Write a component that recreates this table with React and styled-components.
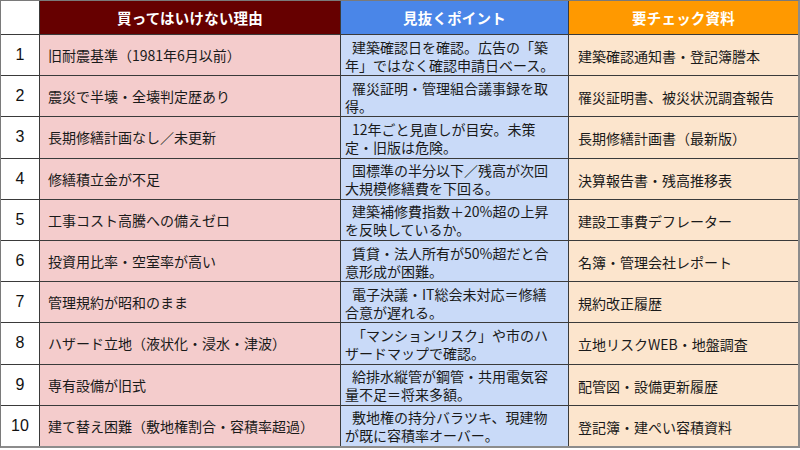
import React from "react";
import styled, { createGlobalStyle } from "styled-components";

const Global = createGlobalStyle`
  html, body { margin: 0; padding: 0; background: #ffffff; }
  body { font-family: "Noto Sans CJK JP", "Noto Sans", sans-serif; }
`;

const Table = styled.div`
  box-sizing: border-box;
  width: 800px;
  height: 448px;
  border-top: 1px solid #7a7a7a;
  border-left: 1px solid #7a7a7a;
  border-right: 2px solid #8c8c8c;
  border-bottom: 2px solid #8c8c8c;
  display: grid;
  grid-template-columns: 38px 300px 227px 1fr;
  grid-template-rows: 33px repeat(10, 1fr);
  gap: 1px;
  background: #3a3a3a;
`;

const HeaderCell = styled.div`
  background: ${(p) => p.$bg};
  color: #ffffff;
  font-weight: 700;
  font-size: 14.5px;
  display: flex;
  align-items: center;
  justify-content: center;
  letter-spacing: 0.2px;
`;

const NumCell = styled.div`
  background: #ffffff;
  color: #111;
  font-family: "Liberation Sans", Arial, sans-serif;
  font-size: 16px;
  display: flex;
  align-items: center;
  justify-content: center;
`;

const ReasonCell = styled.div`
  background: #f4cccc;
  color: #1a1a1a;
  font-size: 14px;
  display: flex;
  align-items: center;
  padding: 0 8px;
  white-space: nowrap;
`;

const PointCell = styled.div`
  background: #c9daf8;
  color: #1a1a1a;
  font-size: 14px;
  display: flex;
  align-items: center;
  padding: 1px 4px 0;
  overflow: hidden;
`;

const PointText = styled.div`
  line-height: 18px;
  text-indent: 7px;
  white-space: nowrap;
`;

const DocCell = styled.div`
  background: #fce5cd;
  color: #1a1a1a;
  font-size: 14px;
  display: flex;
  align-items: center;
  padding: 2px 9px 0;
  white-space: nowrap;
`;

const rows = [
  ["旧耐震基準（1981年6月以前）", ["建築確認日を確認。広告の「築", "年」ではなく確認申請日ベース。"], "建築確認通知書・登記簿謄本"],
  ["震災で半壊・全壊判定歴あり", ["罹災証明・管理組合議事録を取", "得。"], "罹災証明書、被災状況調査報告"],
  ["長期修繕計画なし／未更新", ["12年ごと見直しが目安。未策", "定・旧版は危険。"], "長期修繕計画書（最新版）"],
  ["修繕積立金が不足", ["国標準の半分以下／残高が次回", "大規模修繕費を下回る。"], "決算報告書・残高推移表"],
  ["工事コスト高騰への備えゼロ", ["建築補修費指数＋20%超の上昇", "を反映しているか。"], "建設工事費デフレーター"],
  ["投資用比率・空室率が高い", ["賃貸・法人所有が50%超だと合", "意形成が困難。"], "名簿・管理会社レポート"],
  ["管理規約が昭和のまま", ["電子決議・IT総会未対応＝修繕", "合意が遅れる。"], "規約改正履歴"],
  ["ハザード立地（液状化・浸水・津波）", ["「マンションリスク」や市のハ", "ザードマップで確認。"], "立地リスクWEB・地盤調査"],
  ["専有設備が旧式", ["給排水縦管が鋼管・共用電気容", "量不足＝将来多額。"], "配管図・設備更新履歴"],
  ["建て替え困難（敷地権割合・容積率超過）", ["敷地権の持分バラツキ、現建物", "が既に容積率オーバー。"], "登記簿・建ぺい容積資料"],
];

export default function App() {
  return (
    <>
      <Global />
      <Table>
        <NumCell />
        <HeaderCell $bg="#660000">買ってはいけない理由</HeaderCell>
        <HeaderCell $bg="#4a86e8">見抜くポイント</HeaderCell>
        <HeaderCell $bg="#ff9900">要チェック資料</HeaderCell>
        {rows.map(([reason, point, doc], i) => (
          <React.Fragment key={i}>
            <NumCell>{i + 1}</NumCell>
            <ReasonCell>{reason}</ReasonCell>
            <PointCell>
              <PointText>
                {point[0]}
                <br />
                {point[1]}
              </PointText>
            </PointCell>
            <DocCell>{doc}</DocCell>
          </React.Fragment>
        ))}
      </Table>
    </>
  );
}
